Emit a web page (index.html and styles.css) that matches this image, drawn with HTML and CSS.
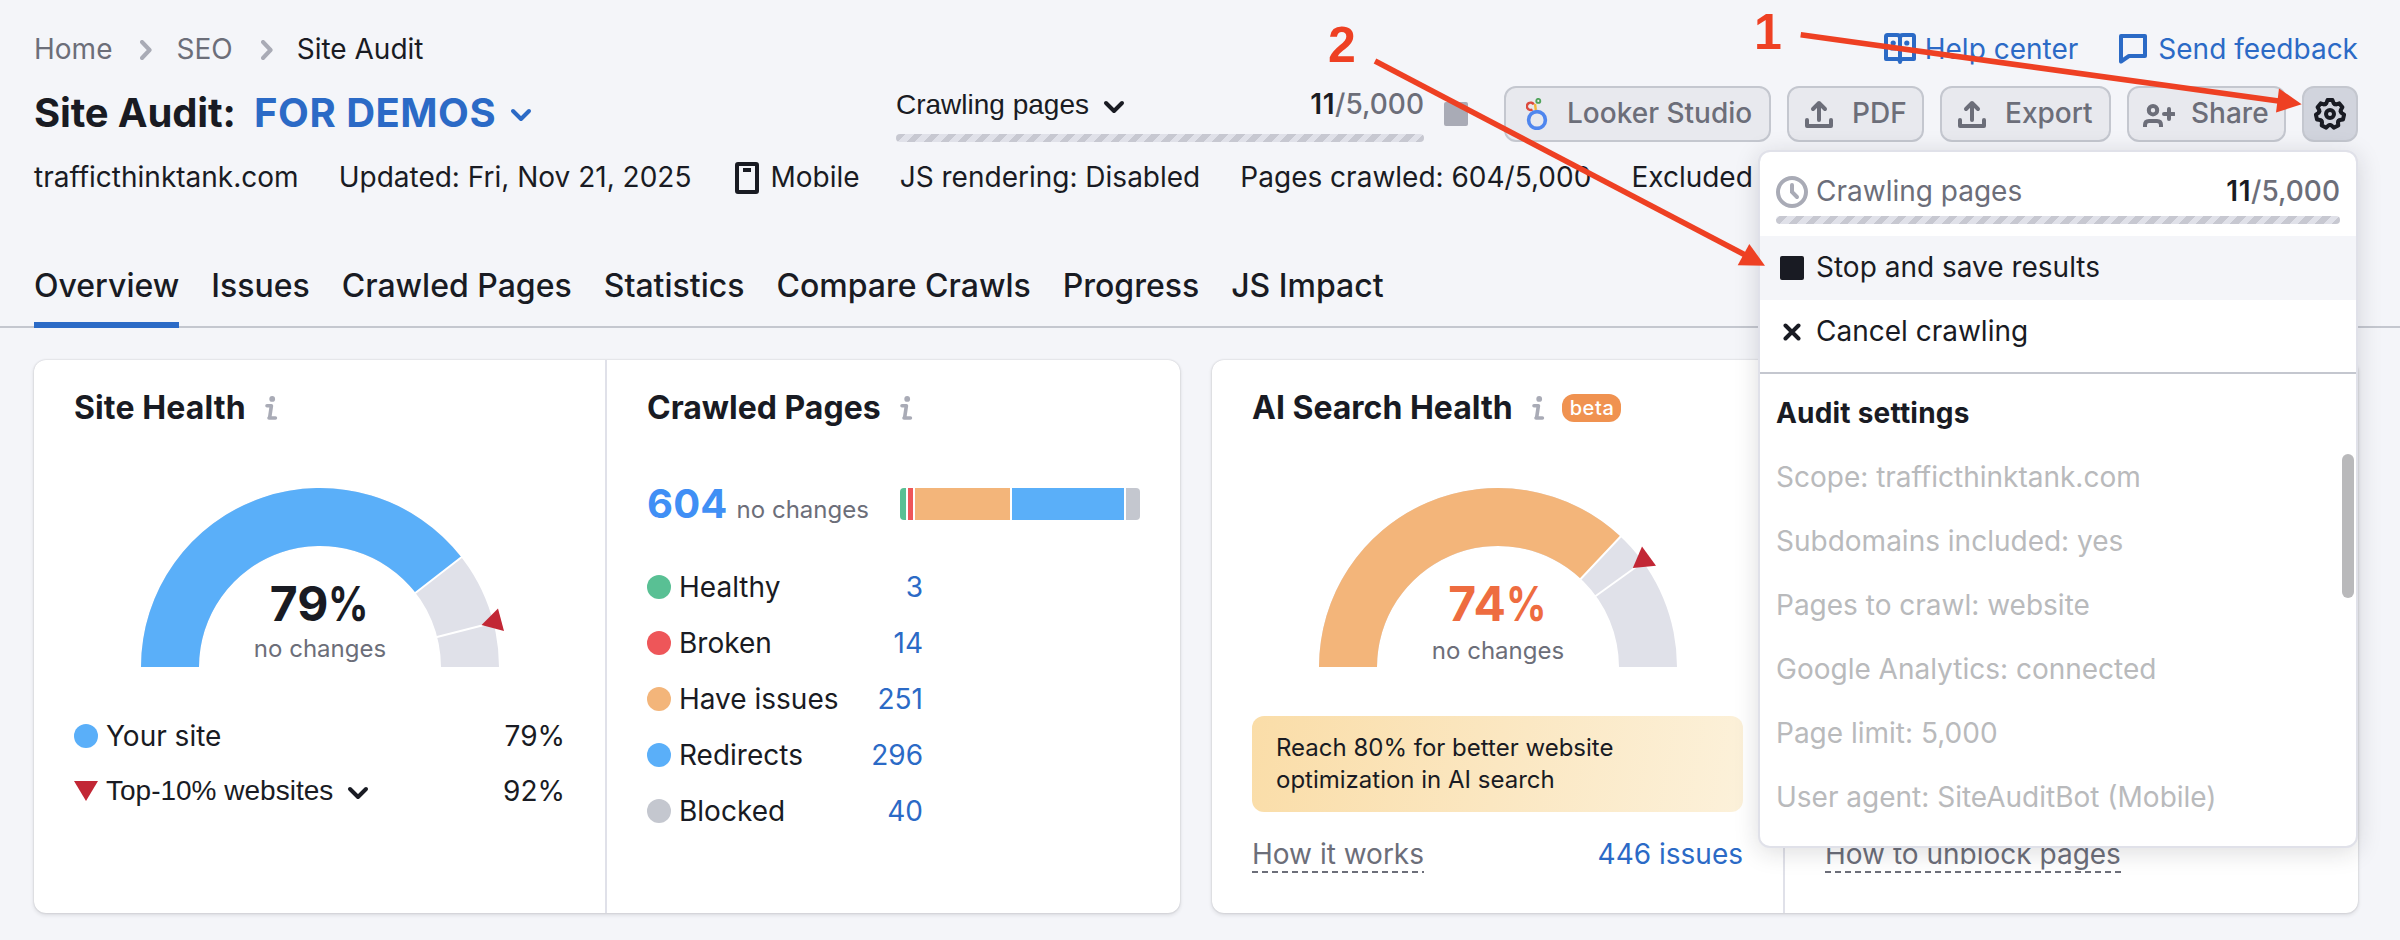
FILE: index.html
```html
<!DOCTYPE html>
<html lang="en">
<head>
<meta charset="utf-8">
<title>Site Audit</title>
<link rel="stylesheet" href="styles.css">
</head>
<body>
<svg width="0" height="0" class="defs" aria-hidden="true">
  <defs>
    <symbol id="info" viewBox="0 0 14 24"><circle cx="8.200" cy="2.900" r="2.900"/><path d="M3 9.800h4.400L5.600 22M5 22h6.400" fill="none" stroke="currentColor" stroke-width="3.600" stroke-linecap="round" stroke-linejoin="round"/></symbol>
    <symbol id="down" viewBox="0 0 22 14"><path d="M3 3l8 8 8-8" fill="none" stroke="currentColor" stroke-width="4" stroke-linecap="round" stroke-linejoin="round"/></symbol>
    <symbol id="right" viewBox="0 0 12 20"><path d="M2 2l7.600 8L2 18" fill="none" stroke="currentColor" stroke-width="4" stroke-linecap="round" stroke-linejoin="round"/></symbol>
    <symbol id="upload" viewBox="0 0 28 28"><path d="M14 20V3M8 9l6-6 6 6M2 20v6h24v-6" fill="none" stroke="currentColor" stroke-width="4" stroke-linecap="round" stroke-linejoin="round"/></symbol>
    <path id="tooth" d="M-4.8-9.9L-3.6-10.9-2.5-13.9H2.5L3.6-10.9 4.8-9.9"/>
  </defs>
</svg>

<header class="header">
  <div class="topline">
    <nav class="crumbs">
      <a>Home</a><svg class="sep"><use href="#right"/></svg><a>SEO</a><svg class="sep"><use href="#right"/></svg><span class="here">Site Audit</span>
    </nav>
    <div class="links">
      <a class="help"><svg width="32" height="32" viewBox="0 0 32 32"><path d="M16 5v23M2 3.500q0-1.500 1.500-1.500H13q3 0 3 3 0-3 3-3h9.500Q30 2 30 3.500V26H19q-3 0-3 3 0-3-3-3H2z" fill="none" stroke="currentColor" stroke-width="4" stroke-linejoin="round"/><circle cx="9.200" cy="10" r="2.600"/><circle cx="22.800" cy="10" r="2.600"/><path d="M6.500 16h5.500M20 16h5.500" stroke="currentColor" stroke-width="3"/></svg>Help center</a>
      <a class="feedback"><svg width="28" height="32" viewBox="0 0 28 32"><path d="M2 28.500V3h24v20H10z" fill="none" stroke="currentColor" stroke-width="4" stroke-linejoin="round"/></svg>Send feedback</a>
    </div>
  </div>

  <div class="titleline">
    <h1 class="title">Site Audit: <span class="project">FOR DEMOS<svg class="chev"><use href="#down"/></svg></span></h1>
    <div class="crawl">
      <div class="crawl-row"><span class="trigger">Crawling pages<svg class="chev"><use href="#down"/></svg></span><span class="count"><b>11</b>/5,000</span></div>
      <div class="stripes"></div>
    </div>
    <span class="stop-box"></span>
    <div class="buttons">
      <button class="btn looker"><svg width="22" height="32" viewBox="0 0 22 32"><circle cx="11" cy="22" r="8.400" fill="none" stroke="#4f86ee" stroke-width="3.600"/><path d="M6.500 11.500A3.700 3.700 0 1 1 7.800 6.500" fill="none" stroke="#dc4a3e" stroke-width="2.400"/><path d="M9 6l.8 6" stroke="#f3b63d" stroke-width="2.400"/><circle cx="12.300" cy="2.900" r="2" fill="none" stroke="#4fa35b" stroke-width="1.900"/></svg><span>Looker Studio</span></button>
      <button class="btn pdf"><svg width="28" height="28"><use href="#upload"/></svg><span>PDF</span></button>
      <button class="btn export"><svg width="28" height="28"><use href="#upload"/></svg><span>Export</span></button>
      <button class="btn share"><svg width="32" height="23" viewBox="0 0 32 23"><g fill="none" stroke="currentColor" stroke-width="4"><circle cx="10" cy="6.200" r="4.200"/><path d="M2 23v-2q0-4 4-4h8q4 0 4 4v2"/><path d="M26 5v10M21 10h10" stroke-linecap="round"/></g></svg><span>Share</span></button>
      <button class="btn gear"><svg width="32" height="32" viewBox="-16 -16 32 32"><g fill="none" stroke="currentColor" stroke-width="4" stroke-linecap="round" stroke-linejoin="round"><use href="#tooth"/><use href="#tooth" transform="rotate(51.430)"/><use href="#tooth" transform="rotate(102.860)"/><use href="#tooth" transform="rotate(154.290)"/><use href="#tooth" transform="rotate(205.710)"/><use href="#tooth" transform="rotate(257.140)"/><use href="#tooth" transform="rotate(308.570)"/><circle r="4"/></g></svg></button>
    </div>
  </div>

  <div class="meta">
    <span>trafficthinktank.com</span>
    <span>Updated: Fri, Nov 21, 2025</span>
    <span class="device"><svg width="24" height="32" viewBox="0 0 24 32"><rect x="2" y="2" width="20" height="28" rx="1" fill="none" stroke="currentColor" stroke-width="4"/><path d="M8 8h8" stroke="currentColor" stroke-width="4"/></svg>Mobile</span>
    <span>JS rendering: Disabled</span>
    <span>Pages crawled: 604/5,000</span>
    <span>Excluded</span>
  </div>
</header>

<nav class="tabs">
  <a class="tab active">Overview</a><a class="tab">Issues</a><a class="tab">Crawled Pages</a><a class="tab">Statistics</a><a class="tab">Compare Crawls</a><a class="tab">Progress</a><a class="tab">JS Impact</a>
</nav>

<main class="cards">
  <section class="card">
    <div class="pane">
      <h2 class="pane-title spaced">Site Health <svg class="info"><use href="#info"/></svg></h2>
      <div class="gauge">
        <svg width="374" height="180" viewBox="-180 -179 374 180">
          <path d="M-179 0A179 179 0 0 1 179 0H121A121 121 0 0 0 -121 0z" fill="#e0e1e9"/>
          <path d="M-179 0A179 179 0 0 1 141.400-109.700L95.600-74.200A121 121 0 0 0 -121 0z" fill="#5aaff9"/>
          <path d="M94-73L143-111M116-29.800L164-42" stroke="#fff" stroke-width="2"/>
          <path d="M161.500-42L178-58.500 184-36z" fill="#c22735"/>
        </svg>
        <div class="gauge-text"><div class="score">79<span class="pct">%</span></div><div class="delta">no changes</div></div>
      </div>
      <div class="legend">
        <div class="legend-row"><span class="dot blue"></span>Your site<span class="val">79%</span></div>
        <div class="legend-row"><svg class="tri" width="24" height="20"><path d="M0 0h24L12 20z" fill="#c22735"/></svg><span class="trigger">Top-10% websites<svg class="chev"><use href="#down"/></svg></span><span class="val">92%</span></div>
      </div>
    </div>
    <div class="pane">
      <h2 class="pane-title">Crawled Pages <svg class="info"><use href="#info"/></svg></h2>
      <div class="total"><span><b class="total-num">604</b><span class="delta">no changes</span></span>
        <div class="bar"><i class="green" style="width:6px"></i><i class="red" style="width:5px"></i><i class="orange" style="width:95px"></i><i class="blue" style="width:112px"></i><i class="gray" style="width:14px"></i></div>
      </div>
      <div class="statuses">
        <div class="status"><span class="dot green"></span>Healthy<a>3</a></div>
        <div class="status"><span class="dot red"></span>Broken<a>14</a></div>
        <div class="status"><span class="dot orange"></span>Have issues<a>251</a></div>
        <div class="status"><span class="dot blue"></span>Redirects<a>296</a></div>
        <div class="status"><span class="dot gray"></span>Blocked<a>40</a></div>
      </div>
    </div>
  </section>

  <section class="card">
    <div class="pane">
      <h2 class="pane-title">AI Search Health <svg class="info"><use href="#info"/></svg><span class="beta">beta</span></h2>
      <div class="gauge ai">
        <svg width="374" height="180" viewBox="-180 -179 374 180">
          <path d="M-179 0A179 179 0 0 1 179 0H121A121 121 0 0 0 -121 0z" fill="#e0e1e9"/>
          <path d="M-179 0A179 179 0 0 1 122.500-130.500L82.800-88.200A121 121 0 0 0 -121 0z" fill="#f3b57a"/>
          <path d="M81-86.300L125-133M97-70.500L138-100" stroke="#fff" stroke-width="2"/>
          <path d="M134.800-99L144-120.500 158-101.200z" fill="#c22735"/>
        </svg>
        <div class="gauge-text"><div class="score">74<span class="pct">%</span></div><div class="delta">no changes</div></div>
      </div>
      <div class="tip">Reach 80% for better website<br>optimization in AI search</div>
      <div class="foot"><span class="hint">How it works</span><a>446 issues</a></div>
    </div>
    <div class="pane end"><div class="foot"><span class="hint">How to unblock pages</span></div></div>
  </section>
</main>

<aside class="menu">
  <div class="menu-progress">
    <div class="menu-head"><svg width="32" height="32" viewBox="0 0 32 32"><g fill="none" stroke="#a9abb6" stroke-width="4"><circle cx="16" cy="16" r="14"/><path d="M16 9v7l5 5" stroke-linecap="round"/></g></svg><span>Crawling pages</span><span class="count"><b>11</b>/5,000</span></div>
    <div class="stripes"></div>
  </div>
  <div class="menu-item hovered"><span class="black-box"></span><span>Stop and save results</span></div>
  <div class="menu-item"><svg class="cross" width="18" height="18" viewBox="0 0 18 18"><path d="M2.500 2.500l13 13M15.500 2.500l-13 13" stroke="currentColor" stroke-width="4" stroke-linecap="round"/></svg><span>Cancel crawling</span></div>
  <div class="settings">
    <div class="settings-title">Audit settings</div>
    <div>Scope: trafficthinktank.com</div>
    <div>Subdomains included: yes</div>
    <div>Pages to crawl: website</div>
    <div>Google Analytics: connected</div>
    <div>Page limit: 5,000</div>
    <div>User agent: SiteAuditBot (Mobile)</div>
    <span class="thumb"></span>
  </div>
</aside>

<div class="steps">
  <svg width="2400" height="300" viewBox="0 0 2400 300">
    <g stroke="#ee4023" stroke-width="5.600"><path d="M1375 61L1750 257.500"/><path d="M1800.700 34.800L2284 101.800"/></g>
    <g fill="#ee4023"><path d="M1765 265.700L1749.300 244 1737.700 265.300z"/><path d="M2301.700 104.300L2279 88.500 2276 112.500z"/></g>
  </svg>
  <span class="step one">1</span><span class="step two">2</span>
</div>
</body>
</html>
```
FILE: styles.css
```css
* { box-sizing: border-box; }
body {
  margin: 0;
  position: relative;
  width: 2400px;
  height: 940px;
  overflow: hidden;
  background: #f4f5f9;
  color: #191b23;
  font: 28px/40px Inter, "Liberation Sans", sans-serif;
}
svg { flex: none; fill: currentColor; }
.defs { position: absolute; }
h1, h2 { margin: 0; }

.header { padding: 29px 42px 0 34px; }
.topline { display: flex; justify-content: space-between; height: 57px; }
.crumbs { display: flex; align-items: center; height: 40px; color: #6c6e79; }
.here { color: #191b23; }
.sep { width: 12px; height: 20px; margin: 2px 24px 0 28px; color: #a9abb6; }
.links { display: flex; gap: 41px; height: 40px; color: #2b6ac6; }
.links a { display: flex; align-items: center; gap: 9px; }
.feedback svg { margin-right: 2px; }

.titleline { display: flex; height: 56px; }
.title { width: 862px; font-size: 40px; line-height: 54px; font-weight: 700; letter-spacing: -.15px; white-space: nowrap; }
.project { margin-left: 9px; letter-spacing: .5px; color: #2b6ac6; }
.chev { width: 22px; height: 14px; margin-left: 14px; }
.title .chev { vertical-align: 5px; }
.crawl { width: 528px; }
.crawl-row { display: flex; justify-content: space-between; height: 48px; line-height: 37px; }
.trigger { font-family: "Liberation Sans", Arial, sans-serif; white-space: nowrap; }
.count { color: #6c6e79; font-weight: 500; }
.count b { color: #191b23; font-weight: 600; letter-spacing: .6px; }
.stripes {
  height: 8px;
  border-radius: 4px;
  background: repeating-linear-gradient(-45deg, #c7c8d1 0 6px, #e0e1e9 6px 12px);
}
.stop-box { width: 24px; height: 24px; margin: 16px 0 0 20px; border-radius: 2px; background: #a9abb6; }
.buttons { display: flex; gap: 16px; margin-left: auto; }
.btn {
  display: flex;
  align-items: center;
  gap: 19px;
  height: 56px;
  padding: 0 0 0 16px;
  border: 2px solid #c4c7cf;
  border-radius: 12px;
  background: #e8e9ee;
  color: #6c6e79;
  font: 500 28px/36px Inter, "Liberation Sans", sans-serif;
  white-space: nowrap;
}
.btn span { padding-bottom: 2px; }
.looker { width: 267px; padding-left: 20px; }
.pdf { width: 137px; }
.export { width: 171px; }
.share { width: 159px; padding-left: 14px; gap: 16px; }
.share svg { margin-top: 2px; }
.gear { width: 56px; padding-left: 10px; background: #d1d4dd; color: #191b23; }

.meta { display: flex; gap: 40.1px; padding-top: 15px; height: 110px; white-space: nowrap; }
.device { display: flex; gap: 12px; }
.device svg { margin: 5px 0 0 3px; }

.tabs { display: flex; gap: 32px; height: 76px; padding-left: 34px; border-bottom: 2px solid #c4c7cf; font-size: 32px; font-weight: 500; line-height: 68px; }
.tab { height: 76px; white-space: nowrap; }
.active { border-bottom: 6px solid #2b6ac6; }

.cards { display: flex; gap: 32px; padding: 32px 42px 0 34px; }
.card { display: flex; width: 1146px; height: 553px; border-radius: 12px; background: #fff; box-shadow: 0 0 2px rgba(25,27,35,.2), 0 2px 4px rgba(25,27,35,.12); }
.pane { display: flex; flex-direction: column; width: 571px; padding: 28px 40px 0 40px; }
.pane + .pane { width: 575px; border-left: 2px solid #e0e1e9; }
.pane-title { display: flex; align-items: center; height: 40px; font-size: 32px; line-height: 40px; white-space: nowrap; }
.spaced { letter-spacing: .12px; }
.info { width: 14px; height: 24px; margin-left: 18px; color: #a9abb6; }
.beta { margin-left: 17px; padding: 0 7px 0 8px; border-radius: 12px; background: #f09250; color: #fff; font-size: 20px; font-weight: 500; line-height: 28px; letter-spacing: .6px; }
.gauge { display: grid; margin: 60px 0 0 66px; }
.gauge > svg { grid-area: 1 / 1; }
.gauge-text { grid-area: 1 / 1; width: 360px; height: 180px; padding-top: 88px; text-align: center; }
.score { font-size: 48px; font-weight: 700; line-height: 56px; }
.pct { display: inline-block; margin-right: -7px; transform: scaleX(.83); transform-origin: 0 0; }
.delta { color: #6c6e79; font-size: 24px; line-height: 32px; }
.gauge .delta { padding-top: 1px; }
.ai .delta { padding-top: 3px; }
.ai .score { color: #ee6c40; }
.legend { padding-top: 40px; }
.legend-row { display: flex; align-items: center; height: 55px; }
.dot { width: 24px; height: 24px; margin-right: 8px; border-radius: 50%; }
.tri { margin-right: 8px; }
.val { margin-left: auto; }
.green { background: #59c094; }
.red { background: #ee5659; }
.orange { background: #f3b57a; }
.blue { background: #5aaff9; }
.gray { background: #c4c7cf; }
.total { display: flex; justify-content: space-between; align-items: center; margin-top: 52px; height: 48px; }
.total > span { padding-top: 3px; }
.total-num { margin-right: 9px; color: #408ff5; font-size: 40px; letter-spacing: .2px; }
.bar { display: flex; gap: 2px; width: 240px; height: 32px; border-radius: 4px; overflow: hidden; }
.statuses { width: 276px; padding-top: 31px; }
.status { display: flex; align-items: center; height: 56px; }
.status a { margin-left: auto; color: #2b6ac6; }
.tip { height: 96px; margin-top: 48px; padding: 16px 24px; border-radius: 12px; background: linear-gradient(100deg, #fadda8, #fcf1da); font-size: 24px; line-height: 32px; white-space: nowrap; }
.foot { display: flex; justify-content: space-between; margin-top: 22px; }
.foot a { color: #2b6ac6; }
.hint { height: 39px; color: #6c6e79; background: repeating-linear-gradient(90deg, #6c6e79 0 6px, transparent 6px 10px) 0 100% / 100% 2px no-repeat; }
.end .foot { margin-top: 446px; }

.menu {
  position: absolute;
  left: 1758px;
  top: 150px;
  width: 600px;
  height: 698px;
  border: 2px solid #e0e1e9;
  border-radius: 12px;
  background: #fff;
  background-clip: padding-box;
  box-shadow: 0 4px 24px rgba(25,27,35,.15);
  overflow: hidden;
}
.menu-progress { height: 84px; padding: 20px 16px 0; }
.menu-head { display: flex; align-items: center; height: 40px; margin-bottom: 4px; gap: 8px; color: #6c6e79; }
.menu-head span { padding-bottom: 2px; }
.menu-head .count { margin-left: auto; }
.menu-item { display: flex; align-items: center; height: 64px; padding-left: 20px; }
.menu-item span:last-child { padding-bottom: 2px; }
.hovered { background: #f4f5f9; }
.black-box { width: 24px; height: 24px; margin-right: 12px; border-radius: 2px; background: #191b23; }
.cross { margin: 0 15px 0 3px; }
.settings { position: relative; margin-top: 8px; padding: 7px 16px; border-top: 2px solid #c4c7cf; line-height: 64px; color: #b9babc; }
.settings-title { color: #191b23; font-weight: 700; letter-spacing: .2px; }
.thumb { position: absolute; right: 2px; top: 80px; width: 12px; height: 144px; border-radius: 6px; background: #b9b9bb; }

.steps { position: absolute; left: 0; top: 0; width: 2400px; height: 300px; }
.step { position: absolute; color: #ee4023; font: bold 50px/50px "Liberation Sans", Arial, sans-serif; }
.one { left: 1754px; top: 7px; }
.two { left: 1328px; top: 20px; }
```
